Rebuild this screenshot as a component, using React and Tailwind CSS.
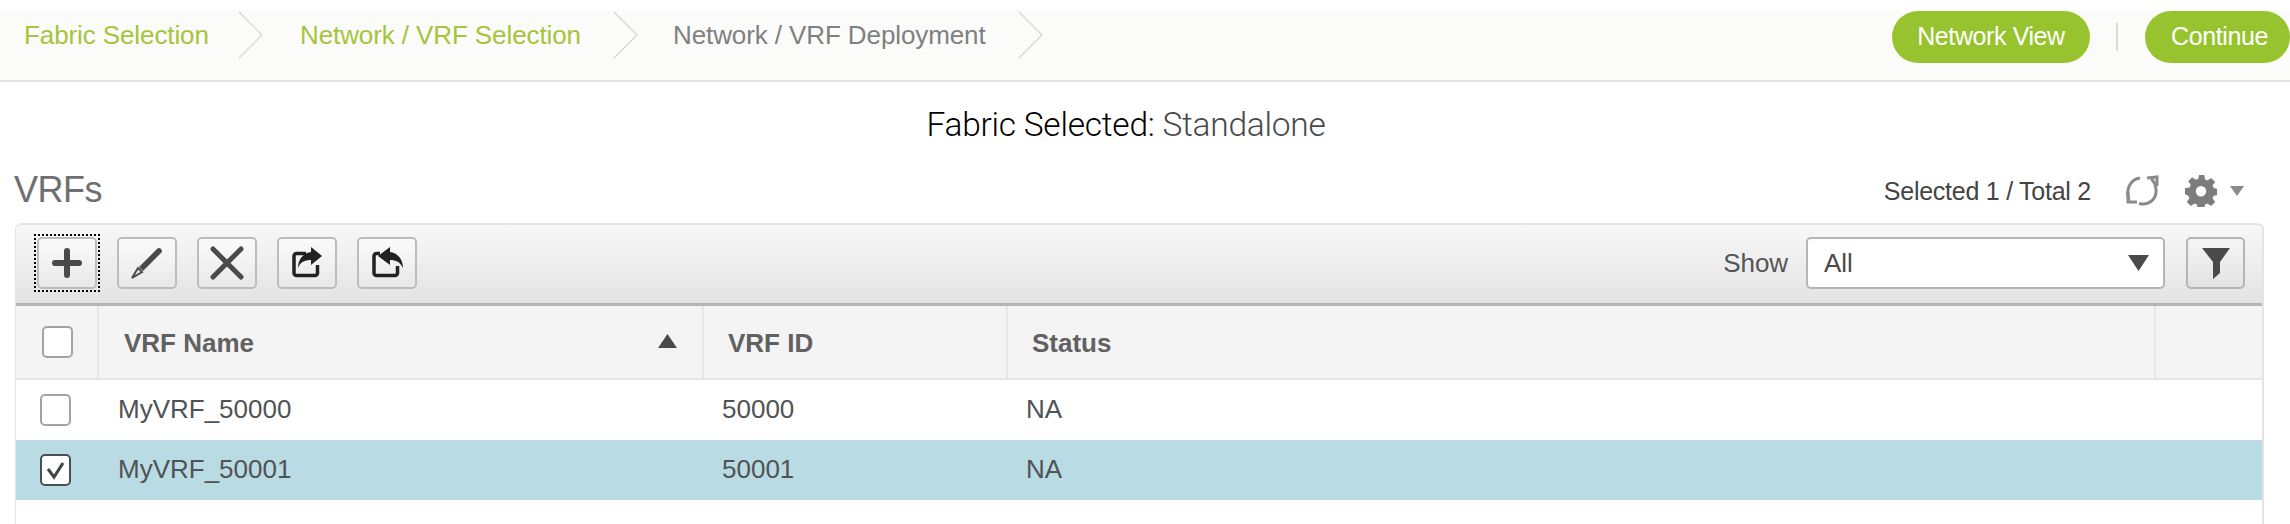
const font = "font-['Liberation_Sans',Arial,sans-serif]";

function Crumb({ label, color, width, gap }) {
  return (
    <div className={`flex items-center justify-between ${width}`}>
      <span className={`text-[26px] tracking-[-0.1px] ${color}`}>{label}</span>
      <svg width="25" height="48" viewBox="0 0 25 48" fill="none" className={gap}>
        <path d="M1 1 L24 24 L1 47" stroke="#d4d4d4" strokeWidth="1.2" />
      </svg>
    </div>
  );
}

function ToolButton({ children, focused }) {
  return (
    <div className={focused ? "outline-2 outline-dotted outline-black outline-offset-1" : ""}>
      <button className="w-[60px] h-[52px] flex items-center justify-center rounded-[5px] border-2 border-[#bcbcbc] bg-gradient-to-b from-[#fbfbfb] to-[#e8e8e8]">
        {children}
      </button>
    </div>
  );
}

function Checkbox({ checked }) {
  return (
    <div className={`w-[31px] h-[32px] rounded-[5px] border-2 bg-white flex items-center justify-center ${checked ? "border-[#4a4f52]" : "border-[#a3a3a3]"}`}>
      {checked && (
        <svg width="22" height="22" viewBox="0 0 22 22" fill="none">
          <path d="M3 10 L9 18 L18 4" stroke="#3f4447" strokeWidth="3" />
        </svg>
      )}
    </div>
  );
}

function Row({ name, id, selected }) {
  return (
    <div className={`h-[60px] pb-[2px] flex items-center text-[26px] text-[#4f5355] ${selected ? "bg-[#b9dbe4]" : "bg-white"}`}>
      <div className="w-[102px] pl-[24px] mt-[2px]">
        <Checkbox checked={selected} />
      </div>
      <div className="w-[604px]">{name}</div>
      <div className="w-[304px]">{id}</div>
      <div>NA</div>
    </div>
  );
}

export default function App() {
  return (
    <div className={`${font} w-[2290px] h-[524px] overflow-hidden bg-white`}>
      <div className="mt-[10px] h-[72px] bg-[#fbfbf9] border-b-2 border-[#e3e3e3] flex items-start justify-between">
        <div className="flex items-center h-[50px] pl-[24px]">
          <Crumb label="Fabric Selection" color="text-[#a6c43c]" width="w-[276px]" gap="mr-[37px]" />
          <Crumb label="Network / VRF Selection" color="text-[#a6c43c]" width="w-[373px]" gap="mr-[35px]" />
          <Crumb label="Network / VRF Deployment" color="text-[#808080]" width="w-[403px]" gap="mr-[33px]" />
        </div>
        <div className="flex items-center h-[52px] mt-[1px]">
          <button className="w-[198px] h-[52px] rounded-full bg-[#97c42e] text-white text-[25px] tracking-[-0.4px]">Network View</button>
          <div className="w-[2px] h-[28px] bg-[#d8d8d8] ml-[26px] mr-[27px]" />
          <button className="w-[145px] h-[52px] rounded-full pl-[4px] bg-[#97c42e] text-white text-[25px] tracking-[-0.4px]">Continue</button>
        </div>
      </div>

      <div className="h-[84px] pr-[38px] pt-[2px] flex items-center justify-center font-['Roboto',sans-serif] font-light text-[33.5px] tracking-[-0.25px] text-black">
        <span>Fabric Selected:&nbsp;</span>
        <span className="text-[#4a4a4a]">Standalone</span>
      </div>

      <div className="h-[48px] flex items-center justify-between pl-[14px] pr-[46px]">
        <span className="text-[36px] text-[#6f6f6f] tracking-[-0.5px]">VRFs</span>
        <div className="flex items-center">
          <span className="text-[25px] tracking-[-0.25px] text-[#444] mt-[3px]">Selected 1 / Total 2</span>
          <svg width="36" height="32" viewBox="0 0 34 32" fill="none" className="ml-[33px] mt-[2px]">
            <path d="M15 3 C6 4 0 14 4 25" stroke="#8a8a8a" strokeWidth="3" />
            <path d="M3 17 L3 27 L12 27" stroke="#8a8a8a" strokeWidth="3" />
            <path d="M14 28.500 C24 31 32 24 31 14 C30.500 10 29 6 26 4" stroke="#8a8a8a" strokeWidth="3" />
            <path d="M22 3 L32 2 L32 11" stroke="#8a8a8a" strokeWidth="3" />
          </svg>
          <svg width="32" height="32" viewBox="0 0 24 24" fill="#7d7d7d" className="ml-[25px] mt-[2px]">
            <path fillRule="evenodd" d="M9.500 0h5l.5 3.300 1.900.8 2.700-1.900 3 3-1.900 2.700.8 1.900 3.500.7v4.500l-3.500.6-.8 1.900 1.900 2.700-3 3-2.700-1.900-1.900.8-.5 3.400h-5l-.5-3.400-1.900-.8-2.700 1.900-3-3 1.900-2.700-.8-1.900L0 14.500V10l3.500-.7.8-1.900-1.900-2.700 3-3 2.700 1.900 1.900-.8.500-2.800zM12 8.300a3.900 3.900 0 1 0 0 7.800 3.900 3.900 0 0 0 0-7.800z" />
          </svg>
          <svg width="14" height="10" viewBox="0 0 14 10" fill="#8a8a8a" className="ml-[13px] mt-[2px]">
            <path d="M0 0h14L7 10z" />
          </svg>
        </div>
      </div>

      <div className="ml-[15px] mr-[26px] mt-[9px] border-l border-r-2 border-[#e4e4e4] rounded-t-[6px] h-[301px]">
        <div className="h-[83px] pb-[2px] flex items-center justify-between pl-[21px] pr-[17px] rounded-t-[6px] border-t-2 border-b-[3px] border-t-[#e5e5e5] border-b-[#b5b5b5] bg-gradient-to-b from-[#f8f8f8] to-[#e3e3e3]">
          <div className="flex items-center gap-[20px]">
            <ToolButton focused>
              <svg width="32" height="32" viewBox="0 0 32 32" stroke="#4a4a4a" strokeWidth="6" strokeLinecap="round">
                <path d="M16 4v24M4 16h24" />
              </svg>
            </ToolButton>
            <ToolButton>
              <svg width="34" height="34" viewBox="0 0 34 34">
                <path d="M9 21 L27 3 a2.500 2.500 0 0 1 4 4 L13 25z" fill="#4a4a4a" />
                <path d="M8 22 L12 26 L2 32z" fill="none" stroke="#4a4a4a" strokeWidth="2" />
              </svg>
            </ToolButton>
            <ToolButton>
              <svg width="34" height="34" viewBox="0 0 34 34" stroke="#4a4a4a" strokeWidth="5" strokeLinecap="round">
                <path d="M3 3l28 28M31 3L3 31" />
              </svg>
            </ToolButton>
            <ToolButton>
              <svg width="32" height="32" viewBox="0 0 32 32">
                <path d="M15 6.500H5.500a2.500 2.500 0 0 0-2.500 2.500v17a2.500 2.500 0 0 0 2.500 2.500h18.500a2.500 2.500 0 0 0 2.500-2.500v-8" fill="none" stroke="#222" strokeWidth="3.500" />
                <path d="M20 0 L31 9 L20 18 V13 C14 13 9 15 7 21 C7 13 12 6 20 5z" fill="#222" />
              </svg>
            </ToolButton>
            <ToolButton>
              <svg width="32" height="32" viewBox="0 0 32 32">
                <path d="M9 6.500H5.500a2.500 2.500 0 0 0-2.500 2.500v17a2.500 2.500 0 0 0 2.500 2.500h18.500a2.500 2.500 0 0 0 2.500-2.500v-7" fill="none" stroke="#222" strokeWidth="3.500" />
                <path d="M19 0 L7 9 L19 18 V13 C25 13 29 15 32 21 C32 13 27 6 19 5z" fill="#222" />
              </svg>
            </ToolButton>
          </div>
          <div className="flex items-center">
            <span className="text-[26px] tracking-[-0.1px] text-[#555]">Show</span>
            <div className="ml-[18px] w-[359px] h-[52px] rounded-[5px] border-2 border-[#b5b5b5] bg-white flex items-center justify-between pl-[16px] pr-[14px] text-[26px] text-[#4a4a4a]">
              <span>All</span>
              <svg width="21" height="16" viewBox="0 0 21 16" fill="#4a4a4a"><path d="M0 0h21L10.500 16z" /></svg>
            </div>
            <button className="ml-[21px] w-[59px] h-[52px] rounded-[5px] border-2 border-[#b5b5b5] bg-gradient-to-b from-[#f5f5f5] to-[#e3e3e3] flex items-center justify-center">
              <svg width="30" height="32" viewBox="0 0 30 32" fill="#4a4a4a"><path d="M1 1h28L19 15v11l-7 6V15z" /></svg>
            </button>
          </div>
        </div>

        <div className="h-[74px] flex items-stretch bg-[#f4f4f4] border-b-2 border-[#e5e5e5] text-[26px] font-bold text-[#616161]">
          <div className="w-[83px] flex items-center pl-[26px] border-r-2 border-[#e7e7e7]">
            <Checkbox />
          </div>
          <div className="w-[605px] pt-[2px] flex items-center justify-between pl-[25px] pr-[25px] border-r-2 border-[#e7e7e7]">
            <span>VRF Name</span>
            <svg width="19" height="14" viewBox="0 0 19 14" fill="#4a4a4a" className="mt-[-5px]"><path d="M9.500 0L19 14H0z" /></svg>
          </div>
          <div className="w-[304px] pt-[2px] flex items-center pl-[24px] border-r-2 border-[#e7e7e7]">VRF ID</div>
          <div className="w-[1148px] pt-[2px] flex items-center pl-[24px] border-r-2 border-[#e7e7e7]">Status</div>
        </div>

        <Row name="MyVRF_50000" id="50000" />
        <Row name="MyVRF_50001" id="50001" selected />
      </div>
    </div>
  );
}
